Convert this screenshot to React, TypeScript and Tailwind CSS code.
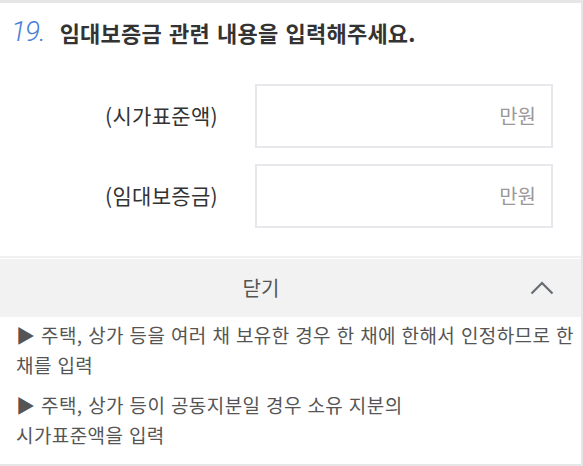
import React from "react";

const KR = { fontFamily: '"Noto Sans CJK KR", "Noto Sans", sans-serif' };

function Field({ label }: { label: string }) {
  return (
    <div className="flex items-center">
      <div className="w-[218px] text-right text-[21px] tracking-[0.3px] text-[#333]">{label}</div>
      <div className="ml-[37px] flex h-[64px] w-[298px] items-center justify-end border-2 border-[#e8e8ec] pr-[15px] text-[20px] text-[#999]">
        만원
      </div>
    </div>
  );
}

export default function App() {
  return (
    <div
      className="box-border h-[466px] w-[583px] overflow-hidden border-t-[3px] border-r-2 border-b-2 border-[#e6e6e6] bg-white"
      style={KR}
    >
      <div className="flex h-[40px] items-center pl-[11px] mt-[9px]">
        <span
          className="text-[28px] italic font-light text-[#4a80d8] tracking-[-1px]"
          style={{ fontFamily: 'Roboto, "Liberation Sans", sans-serif' }}
        >
          19.
        </span>
        <span className="ml-[15px] text-[22px] font-bold tracking-[0.2px] [word-spacing:2px] text-[#333]">
          임대보증금 관련 내용을 입력해주세요.
        </span>
      </div>
      <div className="mt-[32px] flex flex-col gap-[16px] border-b-2 border-[#f0f0f0] pb-[28px]">
        <Field label="(시가표준액)" />
        <Field label="(임대보증금)" />
      </div>
      <div className="flex h-[58px] items-center bg-[#f2f2f2] mt-[1px]">
        <div className="w-[522px] text-center text-[20px] text-[#555]">닫기</div>
        <svg width="24" height="14" viewBox="0 0 24 14" className="ml-[8px]">
          <path d="M1.5 12.5 L12 2 L22.5 12.5" fill="none" stroke="#676c74" strokeWidth="2.2" />
        </svg>
      </div>
      <div className="pl-[16px] pt-[3px] text-[19px] leading-[30px] tracking-[0.4px] [word-spacing:1px] text-[#555]">
        <p>▶ 주택, 상가 등을 여러 채 보유한 경우 한 채에 한해서 인정하므로 한 채를 입력</p>
        <p className="mt-[10px]">
          ▶ 주택, 상가 등이 공동지분일 경우 소유 지분의
          <br />
          시가표준액을 입력
        </p>
      </div>
    </div>
  );
}
